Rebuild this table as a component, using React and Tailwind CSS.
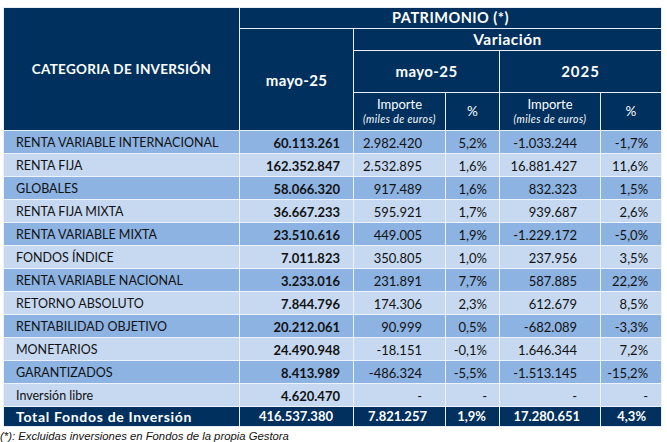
import React from "react";

const rows = [
  ["RENTA VARIABLE INTERNACIONAL", "60.113.261", "2.982.420", "5,2%", "-1.033.244", "-1,7%", "dark"],
  ["RENTA FIJA", "162.352.847", "2.532.895", "1,6%", "16.881.427", "11,6%", "light"],
  ["GLOBALES", "58.066.320", "917.489", "1,6%", "832.323", "1,5%", "dark"],
  ["RENTA FIJA MIXTA", "36.667.233", "595.921", "1,7%", "939.687", "2,6%", "light"],
  ["RENTA VARIABLE MIXTA", "23.510.616", "449.005", "1,9%", "-1.229.172", "-5,0%", "dark"],
  ["FONDOS ÍNDICE", "7.011.823", "350.805", "1,0%", "237.956", "3,5%", "light"],
  ["RENTA VARIABLE NACIONAL", "3.233.016", "231.891", "7,7%", "587.885", "22,2%", "dark"],
  ["RETORNO ABSOLUTO", "7.844.796", "174.306", "2,3%", "612.679", "8,5%", "light"],
  ["RENTABILIDAD OBJETIVO", "20.212.061", "90.999", "0,5%", "-682.089", "-3,3%", "dark"],
  ["MONETARIOS", "24.490.948", "-18.151", "-0,1%", "1.646.344", "7,2%", "light"],
  ["GARANTIZADOS", "8.413.989", "-486.324", "-5,5%", "-1.513.145", "-15,2%", "dark"],
  ["Inversión libre", "4.620.470", "-", "-", "-", "-", "light"],
];

const hd = "bg-[#00305e] text-white font-bold border border-[#e8eef6]";

export default function App() {
  return (
    <div className="w-[667px] h-[442px] bg-white pt-[7px] pl-[3px]" style={{ fontFamily: "Lato, 'Noto Sans', sans-serif" }}>
      <table className="border-collapse table-fixed w-[658px] text-[13px] text-[#111]">
        <colgroup>
          <col className="w-[236px]" />
          <col className="w-[114px]" />
          <col className="w-[92px]" />
          <col className="w-[54px]" />
          <col className="w-[101px]" />
          <col className="w-[61px]" />
        </colgroup>
        <thead>
          <tr className="h-[21px]">
            <th rowSpan={4} className={`${hd} text-[13.5px] tracking-[0.3px]`}>CATEGORIA DE INVERSIÓN</th>
            <th colSpan={5} className={`${hd} text-[14.5px] tracking-[0.5px] leading-none`}>PATRIMONIO (*)</th>
          </tr>
          <tr className="h-[22px]">
            <th rowSpan={3} className={`${hd} text-[15px] tracking-[0.3px] pt-[2px]`}>mayo-25</th>
            <th colSpan={4} className={`${hd} text-[15.5px] tracking-[0.5px] leading-none`}>Variación</th>
          </tr>
          <tr className="h-[42px]">
            <th colSpan={2} className={`${hd} text-[15px] tracking-[0.4px]`}>mayo-25</th>
            <th colSpan={2} className={`${hd} text-[15px] tracking-[1px]`}>2025</th>
          </tr>
          <tr className="h-[38px]">
            <th className={`${hd} !font-normal leading-none`}>
              <div className="text-[13px]">Importe</div>
              <div className="text-[10.5px] italic tracking-[0.4px] mt-[3px]">(miles de euros)</div>
            </th>
            <th className={`${hd} !font-normal text-[13.5px]`}>%</th>
            <th className={`${hd} !font-normal leading-none`}>
              <div className="text-[13px]">Importe</div>
              <div className="text-[10.5px] italic tracking-[0.4px] mt-[3px]">(miles de euros)</div>
            </th>
            <th className={`${hd} !font-normal text-[13.5px]`}>%</th>
          </tr>
        </thead>
        <tbody>
          {rows.map((r) => {
            const bg = r[6] === "dark" ? "bg-[#8db3e2]" : "bg-[#c6d9f1]";
            const td = `${bg} border border-[#eef3fa] leading-none pt-[3px]`;
            return (
              <tr key={r[0]} className="h-[23px]">
                <td className={`${td} pl-[12px] text-[12.5px]`}>{r[0]}</td>
                <td className={`${td} text-right pr-[13px] font-bold`}>{r[1]}</td>
                <td className={`${td} text-right pr-[23px]`}>{r[2]}</td>
                <td className={`${td} text-right pr-[12px]`}>{r[3]}</td>
                <td className={`${td} text-right pr-[23px]`}>{r[4]}</td>
                <td className={`${td} text-right pr-[13px]`}>{r[5]}</td>
              </tr>
            );
          })}
          <tr className="h-[20px]">
            <td className={`${hd} pl-[12px] text-[14px] tracking-[0.7px] leading-none`}>Total Fondos de Inversión</td>
            <td className={`${hd} text-right pr-[20px] leading-none`}>416.537.380</td>
            <td className={`${hd} text-right pr-[18px] leading-none`}>7.821.257</td>
            <td className={`${hd} text-right pr-[13px] leading-none`}>1,9%</td>
            <td className={`${hd} text-right pr-[20px] leading-none`}>17.280.651</td>
            <td className={`${hd} text-right pr-[15px] leading-none`}>4,3%</td>
          </tr>
        </tbody>
      </table>
      <div className="-ml-[3px] mt-[2px] text-[11.3px] italic leading-[14px] text-[#111]" style={{ fontFamily: "'Liberation Sans', Arial, sans-serif" }}>
        (*): Excluidas inversiones en Fondos de la propia Gestora
      </div>
    </div>
  );
}
